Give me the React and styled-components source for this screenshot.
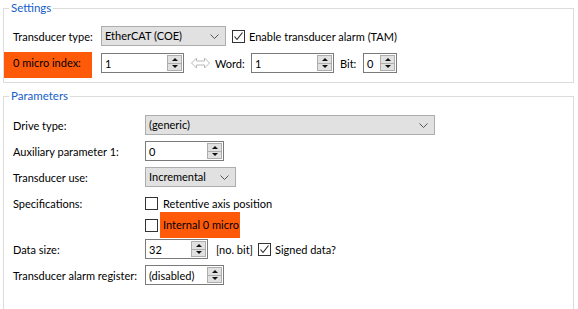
import React from 'react';
import styled, { createGlobalStyle } from 'styled-components';

const GlobalStyle = createGlobalStyle`
    html, body{
        margin:0;
        padding:0;
        background:#fff;
    }
    body{
        font-family:Lato, "Liberation Sans", sans-serif;
        font-size:11px;
        color:#000;
    }
`;

const Page = styled.div`
    width:578px;
    height:309px;
    overflow:hidden;
    box-sizing:border-box;
    padding:1px 4px 0 3px;
    background:#fff;
`;

const Group = styled.fieldset`
    margin:${p => p.$mt || 0}px 0 0 0;
    padding:0 0 ${p => p.$pb || 0}px 0;
    border:1px solid #dcdcdc;
    min-width:0;
`;

const Legend = styled.legend`
    margin-left:5px;
    padding:0 2px;
    font-size:11.5px;
    line-height:14px;
    color:#1560c8;
`;

const Row = styled.div`
    display:flex;
    align-items:center;
    height:20px;
    margin-top:${p => p.$mt || 0}px;
`;

const Label = styled.div`
    box-sizing:border-box;
    width:${p => p.$w}px;
    padding-left:9px;
    white-space:nowrap;
`;

const Highlight = styled.div`
    box-sizing:border-box;
    width:${p => p.$w}px;
    height:26px;
    padding-left:${p => p.$pl || 9}px;
    margin-left:${p => p.$ml || 0}px;
    margin-right:${p => p.$mr || 0}px;
    background:#ff5a0a;
    line-height:${p => p.$lh || 26}px;
    white-space:nowrap;
    align-self:${p => p.$top ? 'flex-start' : 'center'};
    margin-top:${p => p.$top ? -1 : 0}px;
`;

const Text = styled.span`
    display:inline-block;
    box-sizing:border-box;
    width:${p => p.$w ? `${p.$w}px` : 'auto'};
    margin-left:${p => p.$ml || 0}px;
    white-space:nowrap;
`;

const Combo = styled.div`
    position:relative;
    box-sizing:border-box;
    width:${p => p.$w}px;
    height:20px;
    padding-left:3px;
    border:1px solid #adadad;
    background:#e1e1e1;
    line-height:18px;
    white-space:nowrap;
    svg{
        position:absolute;
        right:6px;
        top:7px;
    }
`;

const Spin = styled.div`
    box-sizing:border-box;
    display:flex;
    align-items:center;
    width:${p => p.$w}px;
    height:20px;
    border:1px solid #7a7a7a;
    background:#fff;
    padding:0 1px 0 3px;
`;

const SpinValue = styled.span`
    flex:1;
    white-space:nowrap;
`;

const SpinButtons = styled.div`
    display:flex;
    flex-direction:column;
    width:15px;
    height:16px;
    box-sizing:border-box;
    border:1px solid #adadad;
    background:#e1e1e1;
`;

const SpinHalf = styled.div`
    flex:1;
    display:flex;
    align-items:center;
    justify-content:center;
    & + &{
        border-top:1px solid #adadad;
    }
    &::before{
        content:"";
        border-left:3px solid transparent;
        border-right:3px solid transparent;
        ${p => p.$down ? 'border-top:3px solid #111;' : 'border-bottom:3px solid #111;'}
    }
`;

const Box = styled.div`
    box-sizing:border-box;
    width:13px;
    height:13px;
    border:1px solid #333;
    background:#fff;
    margin-left:${p => p.$ml || 0}px;
    flex:none;
    svg{
        display:block;
    }
`;

const Arrow = styled.svg`
    margin-left:7px;
    flex:none;
`;

const Spinner = ({ w, value }) => (
    <Spin $w={w}>
        <SpinValue>{value}</SpinValue>
        <SpinButtons>
            <SpinHalf />
            <SpinHalf $down />
        </SpinButtons>
    </Spin>
);

const Chevron = () => (
    <svg width="9" height="5" viewBox="0 0 9 5">
        <polyline points="0.5,0.5 4.5,4.5 8.5,0.5" fill="none" stroke="#555" strokeWidth="1" />
    </svg>
);

const CheckBox = ({ checked, ml }) => (
    <Box $ml={ml}>
        {checked && (
            <svg width="11" height="11" viewBox="0 0 11 11">
                <polyline points="1.5,5.5 4,8.5 9.5,1.5" fill="none" stroke="#222" strokeWidth="1.1" />
            </svg>
        )}
    </Box>
);

const App = () => {
    return (
        <Page>
            <GlobalStyle />
            <Group $pb={9}>
                <Legend>Settings</Legend>
                <Row $mt={11}>
                    <Label $w={97}>Transducer type:</Label>
                    <Combo $w={125}>EtherCAT (COE)<Chevron /></Combo>
                    <CheckBox checked ml={6} />
                    <Text $ml={4}>Enable transducer alarm (TAM)</Text>
                </Row>
                <Row $mt={7}>
                    <Highlight $w={88} $mr={9} $top $lh={22}>0 micro index:</Highlight>
                    <Spinner w={83} value="1" />
                    <Arrow width="19" height="12" viewBox="0 0 19 12">
                        <polygon points="0.5,6 5.5,1 5.5,4 13.5,4 13.5,1 18.5,6 13.5,11 13.5,8 5.5,8 5.5,11" fill="#fff" stroke="#b8b8b8" strokeWidth="1" />
                    </Arrow>
                    <Text $w={36} $ml={5}>Word:</Text>
                    <Spinner w={83} value="1" />
                    <Text $w={23} $ml={6}>Bit:</Text>
                    <Spinner w={34} value="0" />
                </Row>
            </Group>
            <Group $mt={6} $pb={30}>
                <Legend>Parameters</Legend>
                <Row $mt={12}>
                    <Label $w={141}>Drive type:</Label>
                    <Combo $w={290}>(generic)<Chevron /></Combo>
                </Row>
                <Row $mt={6}>
                    <Label $w={141}>Auxiliary parameter 1:</Label>
                    <Spinner w={79} value="0" />
                </Row>
                <Row $mt={6}>
                    <Label $w={141}>Transducer use:</Label>
                    <Combo $w={91}>Incremental<Chevron /></Combo>
                </Row>
                <Row $mt={6}>
                    <Label $w={141}>Specifications:</Label>
                    <CheckBox />
                    <Text $ml={5}>Retentive axis position</Text>
                </Row>
                <Row $mt={2}>
                    <Label $w={141} />
                    <CheckBox />
                    <Highlight $w={80} $pl={3} $ml={2}>Internal 0 micro</Highlight>
                </Row>
                <Row $mt={4}>
                    <Label $w={141}>Data size:</Label>
                    <Spinner w={63} value="32" />
                    <Text $ml={8}>[no. bit]</Text>
                    <CheckBox checked ml={5} />
                    <Text $ml={4}>Signed data?</Text>
                </Row>
                <Row $mt={6}>
                    <Label $w={141}>Transducer alarm register:</Label>
                    <Spinner w={79} value="(disabled)" />
                </Row>
            </Group>
        </Page>
    );
};

export default App;
